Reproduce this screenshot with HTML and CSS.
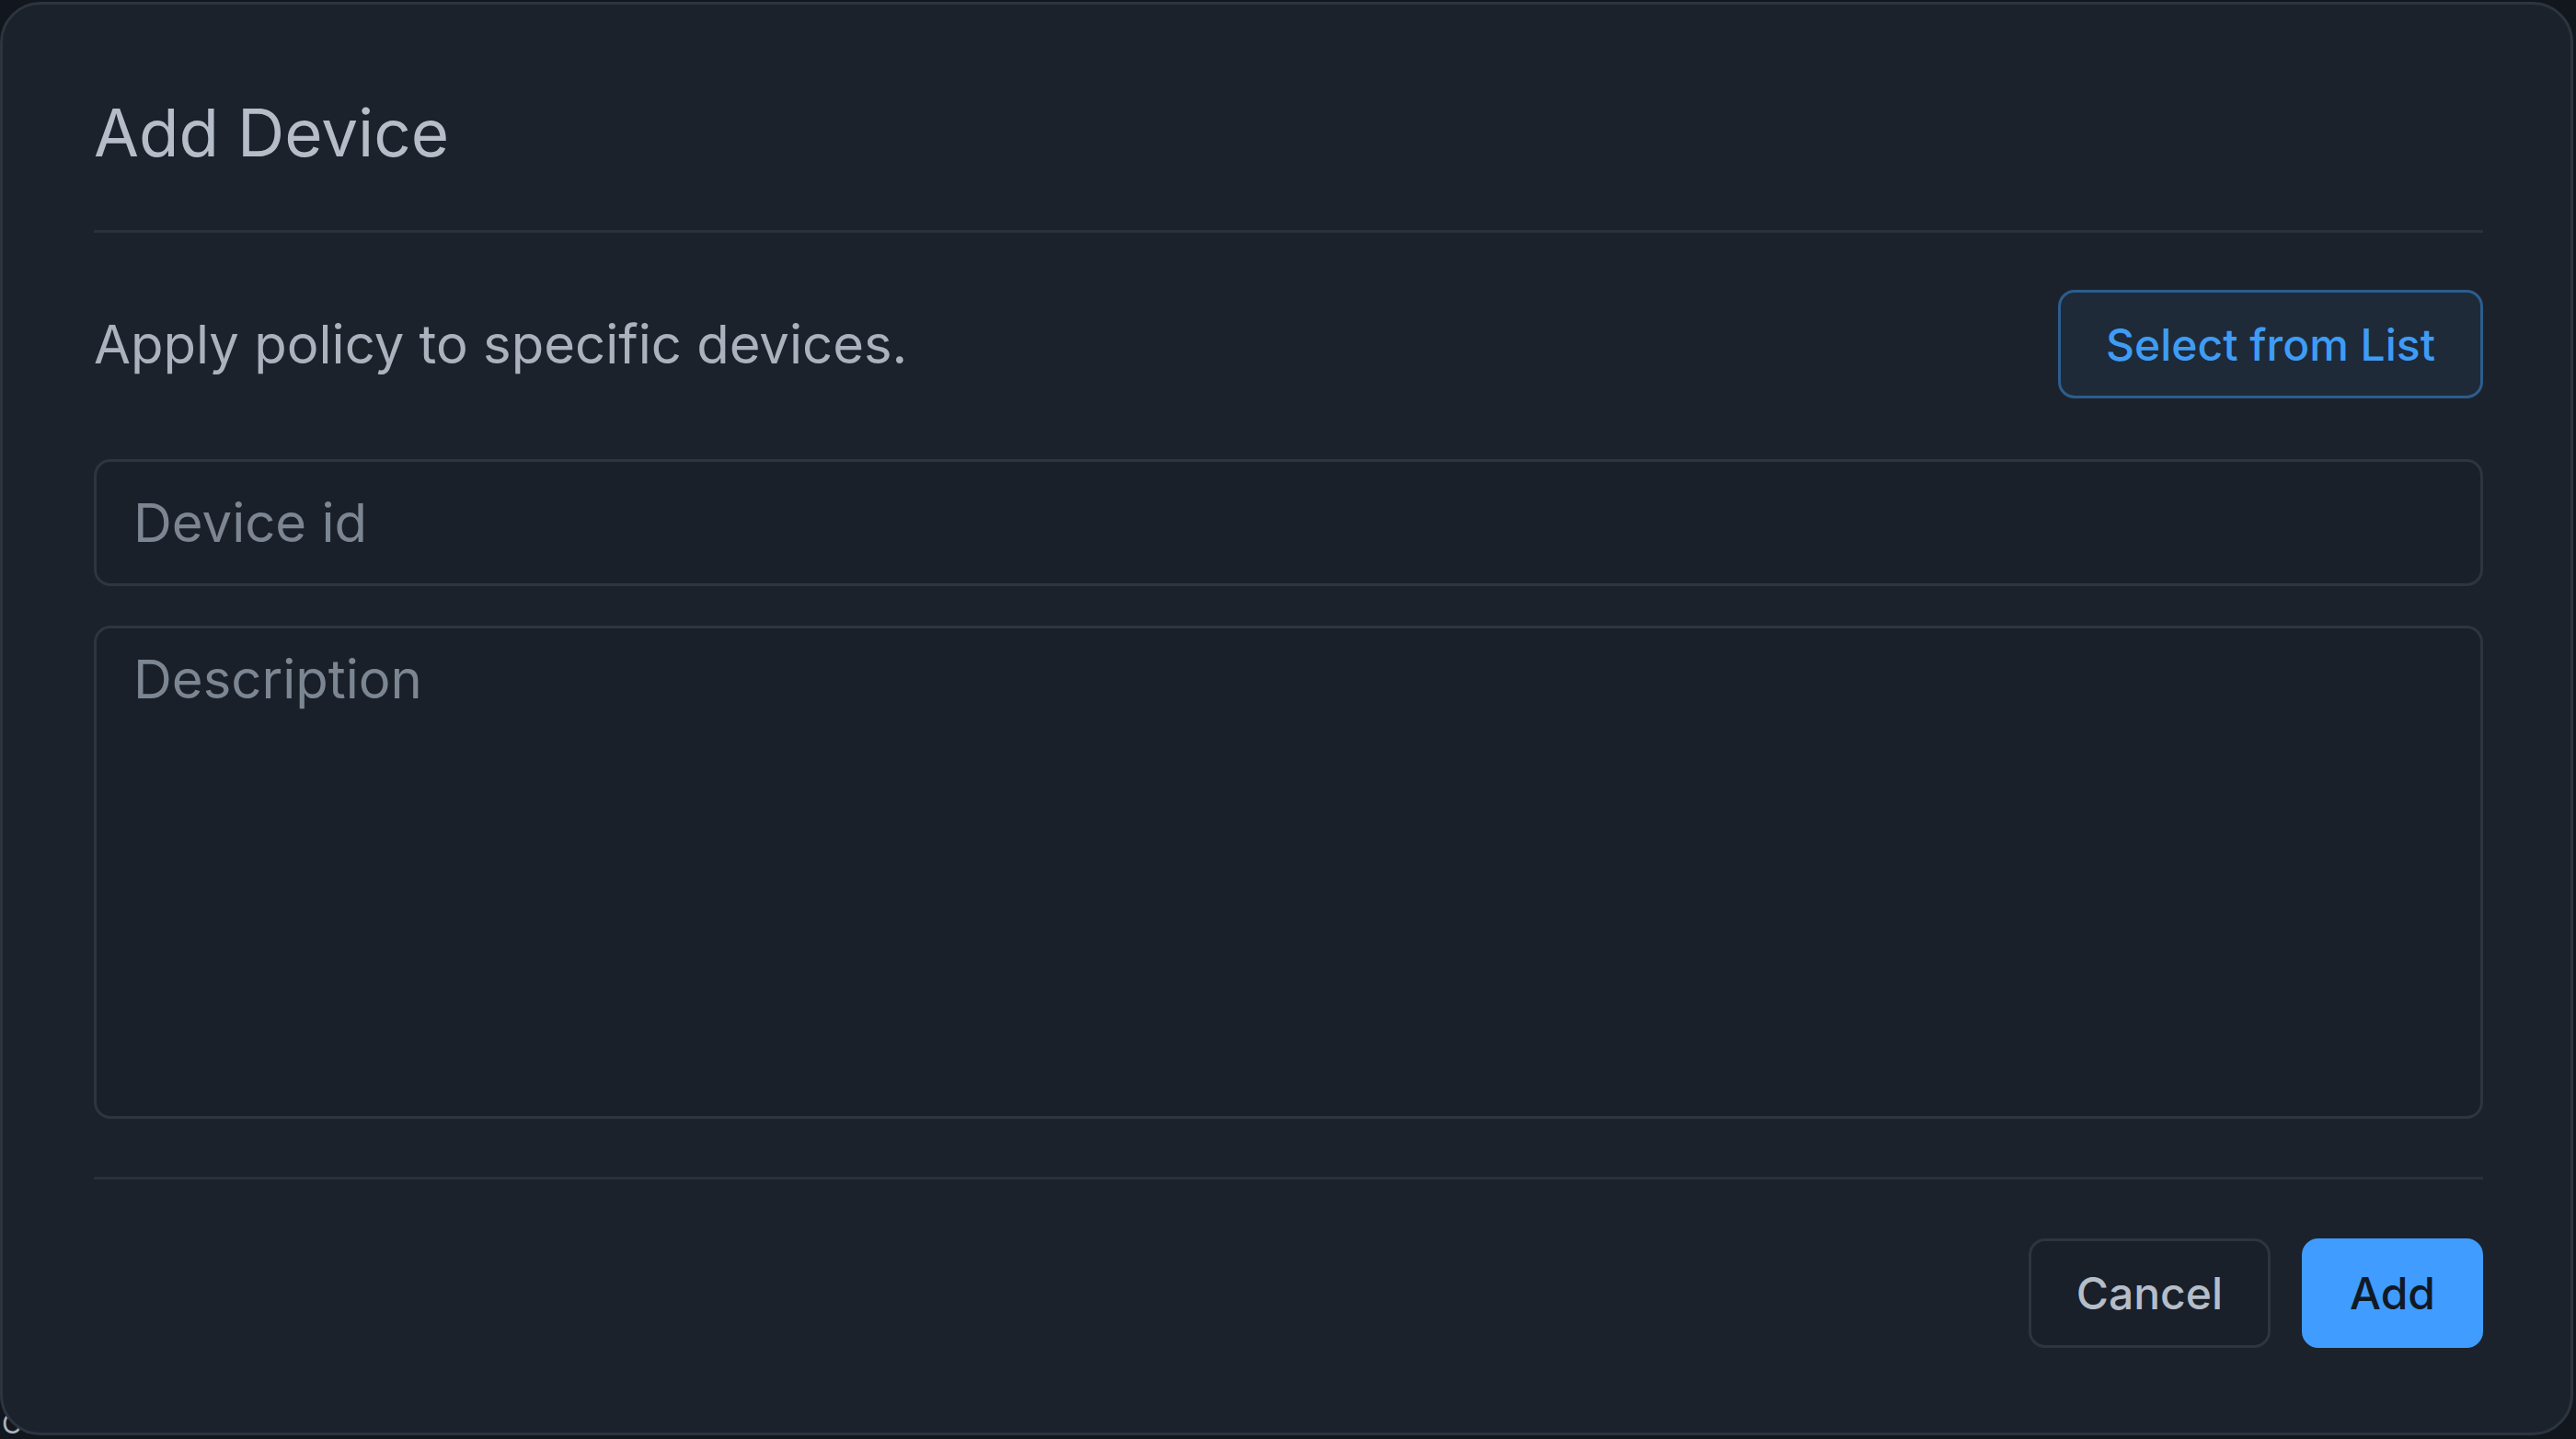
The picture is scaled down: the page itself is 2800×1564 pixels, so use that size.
FILE: index.html
```html
<!DOCTYPE html>
<html lang="en">

<head>
    <meta charset="UTF-8">
    <meta name="viewport" content="width=device-width, initial-scale=1.0">
    <title>Add Device</title>
    <link rel="stylesheet" href="styles.css">
</head>

<body>

    <div class="page">
        <span class="page-text">Co</span>
    </div>

    <div class="modal" role="dialog" aria-labelledby="modalTitle">
        <div class="modal-header">
            <h1 id="modalTitle">Add Device</h1>
        </div>

        <form class="modal-body" action="#" method="POST">
            <div class="intro-row">
                <p>Apply policy to specific devices.</p>
                <button type="button" class="btn btn-outline">Select from List</button>
            </div>

            <input type="text" id="deviceId" name="deviceId" class="field" placeholder="Device id">
            <textarea id="description" name="description" class="field field-area" placeholder="Description"></textarea>
        </form>

        <div class="modal-footer">
            <button type="button" class="btn btn-secondary">Cancel</button>
            <button type="button" class="btn btn-primary">Add</button>
        </div>
    </div>

</body>

</html>
```

FILE: styles.css
```css
body {
    font-family: Inter, "Noto Sans", sans-serif;
    background-color: #12171e;
    margin: 0;
    padding: 0;
    height: 100vh;
    overflow: hidden;
}

.page {
    height: 100%;
    display: flex;
    align-items: flex-end;
}

.page-text {
    font-size: 30px;
    line-height: 1;
    color: #aab2be;
    margin: 0 0 2px 2px;
}

.modal {
    position: absolute;
    top: 2px;
    left: 0;
    width: 2797px;
    height: 1558px;
    box-sizing: border-box;
    background-color: #1c222b;
    border: 3px solid #2d3440;
    border-radius: 44px;
    padding: 96px 95px 0 99px;
    display: flex;
    flex-direction: column;
}

.modal-header {
    padding-bottom: 63px;
    border-bottom: 3px solid #2a313b;
}

.modal-header h1 {
    margin: 0;
    font-size: 71px;
    line-height: 86px;
    font-weight: 400;
    color: #b5bdc9;
}

.modal-body {
    margin: 0;
    padding: 62px 0 63px 0;
    display: flex;
    flex-direction: column;
}

.intro-row {
    display: flex;
    align-items: center;
    justify-content: space-between;
}

.intro-row p {
    margin: 0;
    font-size: 58px;
    color: #aab2be;
}

.field {
    box-sizing: border-box;
    width: 100%;
    margin: 0;
    border: 3px solid #2d3540;
    border-radius: 18px;
    background-color: #1a2029;
    color: #b5bdc9;
    font-family: inherit;
    font-size: 58px;
    outline: none;
}

input.field {
    height: 138px;
    margin-top: 66px;
    padding: 0 40px;
}

.field-area {
    height: 536px;
    margin-top: 43px;
    padding: 20px 40px;
    line-height: normal;
    resize: none;
}

.field::placeholder {
    color: #7c8693;
}

.modal-footer {
    display: flex;
    justify-content: flex-end;
    gap: 34px;
    padding-top: 64px;
    border-top: 3px solid #2a313b;
}

.btn {
    box-sizing: border-box;
    height: 119px;
    padding: 0 49px;
    border: 3px solid transparent;
    border-radius: 18px;
    font-family: inherit;
    font-size: 48px;
    font-weight: 500;
    cursor: pointer;
}

.btn-outline {
    height: 118px;
    background-color: #1e2a38;
    border-color: #2c5d8e;
    color: #3f9cf5;
}

.btn-secondary {
    background-color: #1a2029;
    border-color: #2d3540;
    color: #b5bdc9;
}

.btn-primary {
    background-color: #409cff;
    border-color: #409cff;
    color: #111a24;
}
```
